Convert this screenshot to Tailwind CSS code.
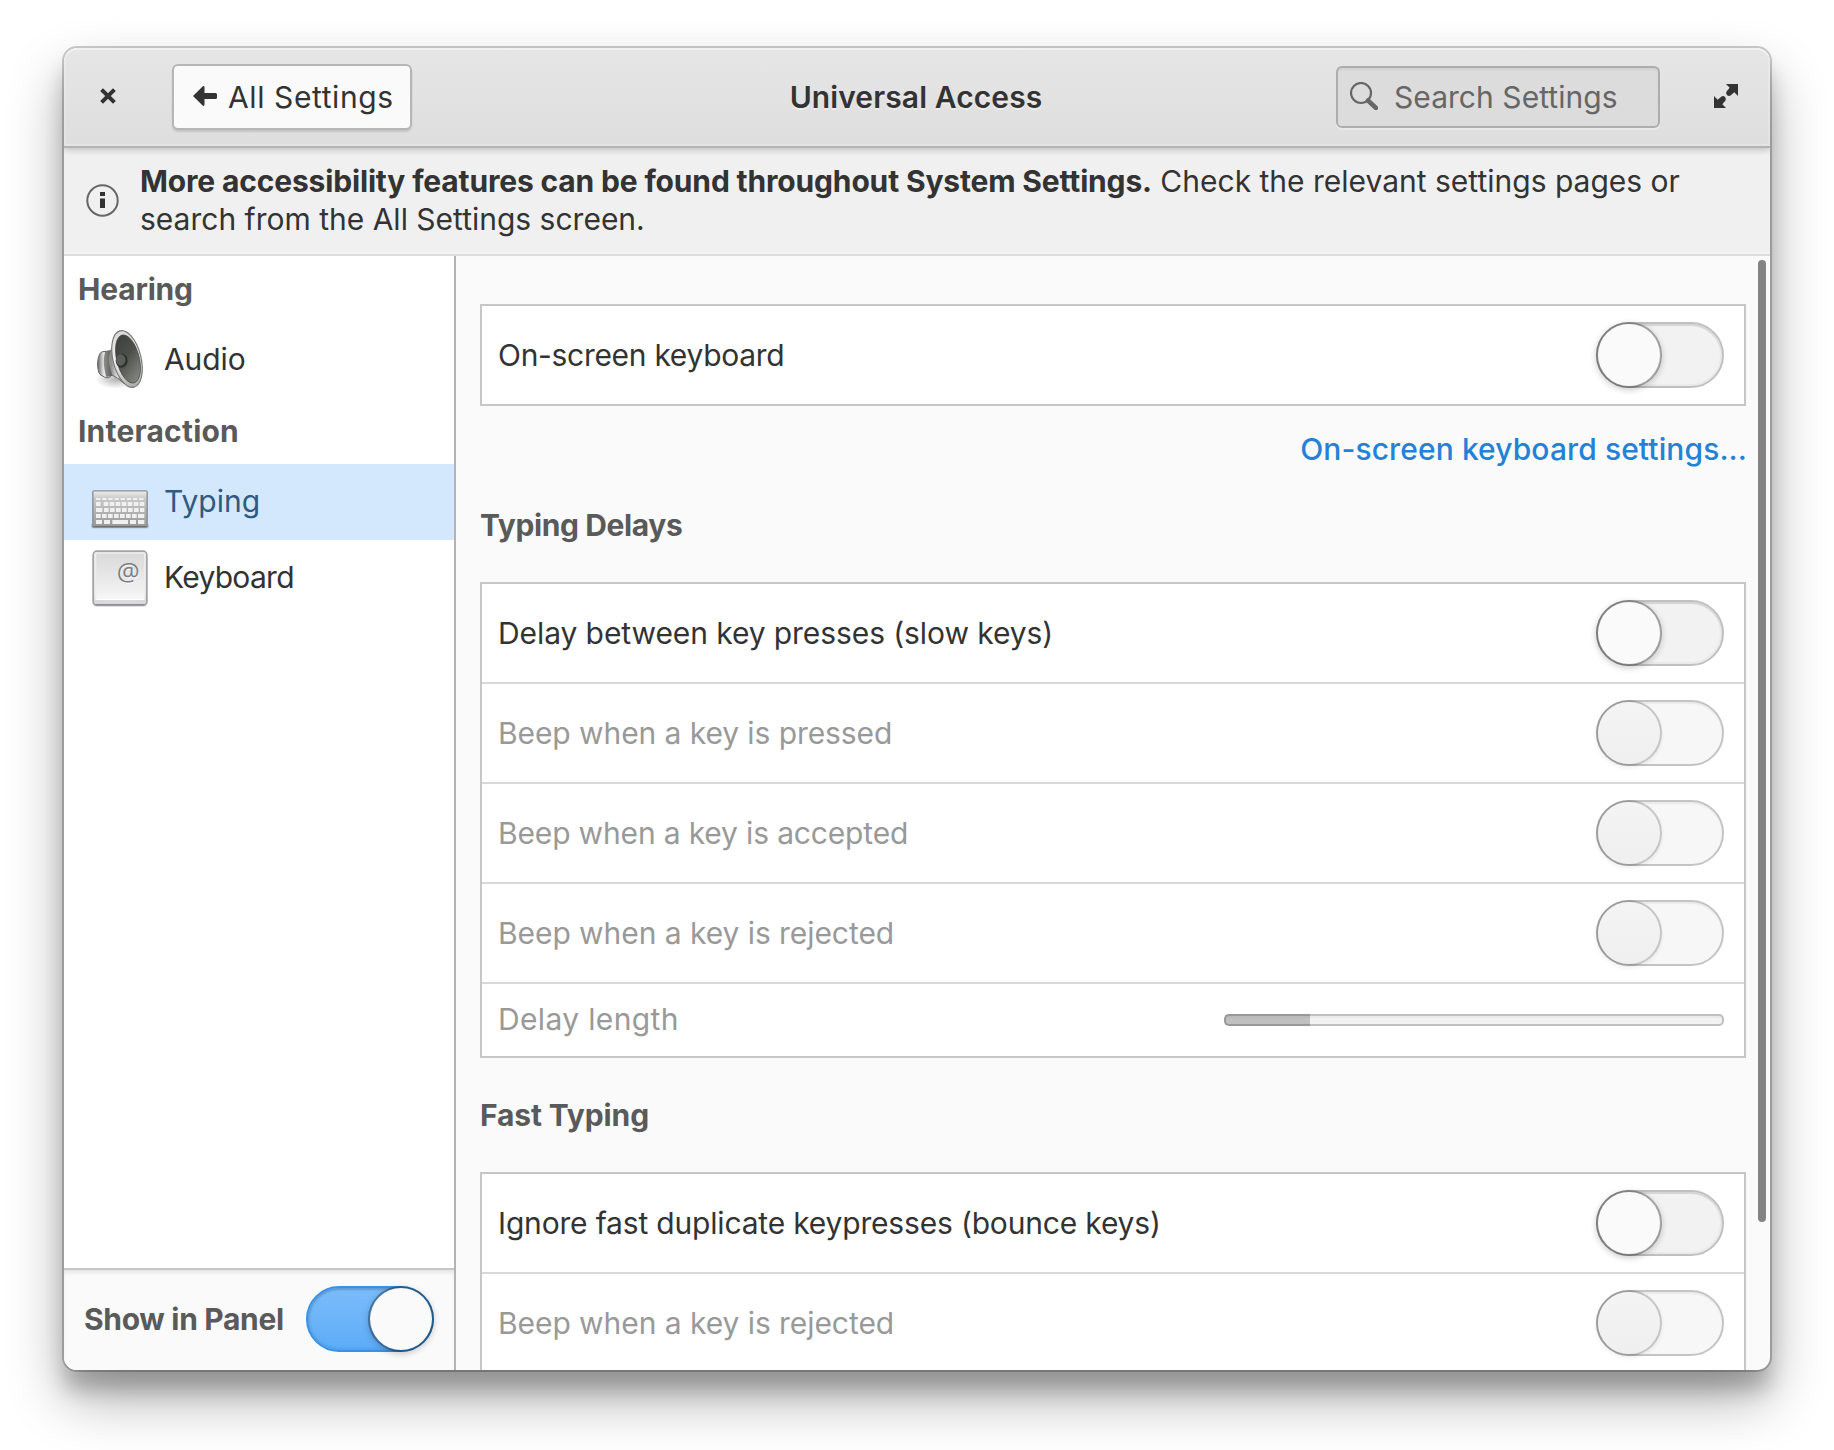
<!DOCTYPE html>
<html lang="en">
<head>
<meta charset="utf-8">
<title>Universal Access</title>
<script src="https://cdn.jsdelivr.net/npm/@tailwindcss/browser@4"></script>
</head>
<body class="h-[1450px] w-[1834px] overflow-hidden bg-white px-16 pt-12 font-['Inter',sans-serif] text-[30px] leading-[38px] text-[#333]">
<div class="flex h-[1322px] w-[1706px] flex-col overflow-hidden rounded-[13px] bg-[#fafafa] shadow-[0_0_0_2px_rgba(0,0,0,0.2),0_28px_56px_rgba(0,0,0,0.33),0_20px_20px_rgba(0,0,0,0.2)]">

  <!-- Header bar -->
  <header class="relative z-10 grid h-[100px] shrink-0 grid-cols-[1fr_auto_1fr] items-center rounded-t-[13px] border-b-2 border-[#b3b3b3] bg-linear-to-b from-[#e6e6e6] to-[#dedede] pr-8 pl-9 shadow-[inset_0_2px_0_rgba(255,255,255,0.35),inset_0_0_0_2px_rgba(255,255,255,0.18),0_2px_6px_rgba(0,0,0,0.2)]">
    <div class="flex items-center">
      <svg class="mb-0.5 size-4" viewBox="0 0 16 16" fill="none" stroke="#333" stroke-width="4"><path d="M1.600 1.600 14.400 14.400M14.400 1.600 1.600 14.400"/></svg>
      <button class="ml-14 flex h-[66px] w-[240px] items-center rounded-md border-2 border-[#b6b6b6] bg-[#fafafa] pl-[19px] shadow-[0_2px_2px_rgba(0,0,0,0.12)]">
        <svg class="mb-0.5 h-5 w-6" viewBox="0 0 24 20" fill="#333"><path d="M0 10 9.600 .5Q11.500-.6 11.500 1.500V7H22.500Q24 7 24 8.500V11.500Q24 13 22.500 13H11.500V18.500Q11.500 20.600 9.600 19.500Z"/></svg>
        <span class="ml-[11px] whitespace-nowrap tracking-[0.6px]">All Settings</span>
      </button>
    </div>
    <h1 class="pr-1.5 font-semibold tracking-[0.1px] [text-shadow:0_2px_0_rgba(255,255,255,0.4)]">Universal Access</h1>
    <div class="flex items-center justify-end">
      <div class="flex h-[62px] w-[324px] items-center rounded-md border-2 border-[#adadad] bg-[#dcdcdc] pl-3 text-[#666] shadow-[inset_0_2px_2px_rgba(0,0,0,0.05),0_2px_0_rgba(255,255,255,0.3)]">
        <svg class="mb-0.5 size-7" viewBox="0 0 28 28" fill="none" stroke="#666"><circle cx="11" cy="11" r="10" stroke-width="2.200"/><path d="M18 18.500 26 26" stroke-width="4.500" stroke-linecap="round"/></svg>
        <span class="ml-4 tracking-[0.050px]">Search Settings</span>
      </div>
      <svg class="mb-0.5 ml-[54px] size-6" viewBox="0 0 24 24" fill="#333"><path d="M12 0H24V12L20.300 8.300 16.500 11.500Q14.500 12.500 13 11T12.500 7.500L15.700 3.700ZM12 24H0V12L3.700 15.700 7.500 12.500Q9.500 11.500 11 13T11.500 16.500L8.300 20.300Z"/></svg>
    </div>
  </header>

  <!-- Info bar -->
  <div class="flex h-[108px] shrink-0 items-center border-b-2 border-[#dcdcdc] bg-[#f0f0f0] pb-0.5 pl-[22px] shadow-[inset_0_-2px_0_#f4f4f4]">
    <svg class="size-[33px]" viewBox="0 0 33 33" fill="none"><circle cx="16.500" cy="16.500" r="15.200" stroke="#666" stroke-width="2"/><path d="M14 8h5v4h-5zM14 14.500h5V24h-5z" fill="#333"/></svg>
    <p class="ml-[21px] whitespace-nowrap"><b class="tracking-[-0.160px]">More accessibility features can be found throughout System Settings.</b> Check the relevant settings pages or<br>search from the All Settings screen.</p>
  </div>

  <div class="flex min-h-0 flex-1">
    <!-- Sidebar -->
    <aside class="flex w-[392px] shrink-0 flex-col border-r-2 border-[#b3b3b3] bg-white">
      <h2 class="flex h-[66px] items-center pl-3.5 font-bold tracking-[-0.200px] text-[#5a5a5a]">Hearing</h2>
      <div class="flex h-[76px] items-center pl-6">
        <svg class="size-16" viewBox="24 54 192 192">
          <defs>
            <linearGradient id="metal" x1="0" y1="0" x2="1" y2="0"><stop offset="0" stop-color="#666"/><stop offset=".25" stop-color="#eee"/><stop offset=".5" stop-color="#888"/><stop offset=".75" stop-color="#e4e4e4"/><stop offset="1" stop-color="#777"/></linearGradient>
            <linearGradient id="rim" x1="0" y1="0" x2="0" y2="1"><stop offset="0" stop-color="#d8d8d6"/><stop offset=".5" stop-color="#f2f2f2"/><stop offset="1" stop-color="#aaa"/></linearGradient>
            <linearGradient id="cone" x1="0" y1="0" x2=".4" y2="1"><stop offset="0" stop-color="#3c3e3b"/><stop offset=".55" stop-color="#4c4e4a"/><stop offset="1" stop-color="#7d7f79"/></linearGradient>
            <radialGradient id="soft"><stop offset="0" stop-color="#000" stop-opacity=".3"/><stop offset="1" stop-color="#000" stop-opacity="0"/></radialGradient>
          </defs>
          <ellipse cx="108" cy="208" rx="62" ry="28" fill="url(#soft)"/>
          <path d="M59 131Q64 123 78 124L92 122Q102 108 106 82L132 220Q112 202 96 195L86 203Q76 206 68 198 58 195 56 186 48 158 59 131Z" fill="url(#metal)" stroke="#666" stroke-width="3"/>
          <path d="M75 126Q66 160 79 200L97 196Q82 160 91 122Z" fill="#4a4a48" opacity=".6"/>
          <ellipse cx="141" cy="147" rx="42" ry="87" transform="rotate(-14 141 147)" fill="url(#rim)" stroke="#777" stroke-width="3.500"/>
          <ellipse cx="144" cy="147" rx="34" ry="74" transform="rotate(-14 144 147)" fill="url(#cone)" stroke="#444" stroke-width="2"/>
          <ellipse cx="125" cy="152" rx="18" ry="21" fill="#30322f"/>
          <ellipse cx="122" cy="150" rx="14" ry="17" fill="#5c5e5a"/>
        </svg>
        <span class="mb-0.5 ml-3 tracking-[-0.100px]">Audio</span>
      </div>
      <h2 class="flex h-[66px] items-center pl-3.5 font-bold tracking-[0.200px] text-[#5a5a5a]">Interaction</h2>
      <div class="flex h-[76px] items-center bg-[#d4e8fd] pl-6 text-[#2f5a82]">
        <svg class="size-16" viewBox="24 0 192 192">
          <defs><linearGradient id="board" x1="0" y1="0" x2="0" y2="1"><stop offset="0" stop-color="#efefef"/><stop offset=".22" stop-color="#c8c8c8"/><stop offset="1" stop-color="#989898"/></linearGradient></defs>
          <rect x="34" y="160" width="172" height="15" rx="5" fill="#4d6275" opacity=".4"/>
          <rect x="38.500" y="62.500" width="163" height="108" rx="4" fill="url(#board)" stroke="#8b8d90" stroke-width="4"/>
          <path d="M40 170H200" stroke="#6c6e70" stroke-width="4"/>
          <g fill="none" stroke="#f0f0f0">
            <path d="M48 87H193" stroke-width="6" stroke-dasharray="13 5.500"/>
            <path d="M48 102H62M71 102H193" stroke-width="12" stroke-dasharray="14 4"/>
            <path d="M48 120H193" stroke-width="12" stroke-dasharray="19 5 14 4 14 4 14 4 14 4 14 4 14 4"/>
            <path d="M48 138H193" stroke-width="12" stroke-dasharray="14 4 14 4 14 4 14 4 14 4 14 4 14 4 20 0"/>
            <path d="M48 156H66M72 156H90M97 156H144M150 156H168M174 156H193" stroke-width="12"/>
          </g>
        </svg>
        <span class="mb-0.5 ml-3">Typing</span>
      </div>
      <div class="flex h-[76px] items-center pl-6">
        <svg class="size-16" viewBox="24 228 192 192">
          <defs><linearGradient id="cap" x1="0" y1="0" x2="0" y2="1"><stop offset="0" stop-color="#d9d9da"/><stop offset="1" stop-color="#f6f6f6"/></linearGradient></defs>
          <rect x="37" y="250" width="166" height="161" rx="14" fill="#000" opacity=".12"/>
          <rect x="39.500" y="243.500" width="161" height="162" rx="11" fill="#dadadd" stroke="#a3a3aa" stroke-width="5"/>
          <path d="M46 404H194" stroke="#8b8b92" stroke-width="4"/>
          <rect x="43" y="247" width="154" height="142" rx="6" fill="#ececec"/>
          <rect x="49" y="251" width="143" height="136" rx="4" fill="url(#cap)"/>
          <path d="M47 388H193" stroke="#fff" stroke-width="4"/>
          <text x="144.500" y="332" text-anchor="middle" font-family="Open Sans, sans-serif" font-size="77" fill="#fff" transform="translate(2 3)">@</text>
          <text x="144.500" y="332" text-anchor="middle" font-family="Open Sans, sans-serif" font-size="77" fill="#7e7e85">@</text>
        </svg>
        <span class="mb-0.5 ml-3 tracking-[-0.720px]">Keyboard</span>
      </div>
      <div class="mt-auto flex h-[102px] items-center border-t-2 border-[#c6c6c6] bg-[#fafafa] pb-0.5 pl-5 shadow-[inset_0_4px_5px_-2px_rgba(0,0,0,0.1)]">
        <span class="w-[222px] whitespace-nowrap font-bold tracking-[-0.320px] text-[#5a5a5a]">Show in Panel</span>
        <div class="relative h-[66px] w-32 rounded-full border-2 border-[#3893e8] bg-linear-to-b from-[#7bbcf9] to-[#5cacf8] shadow-[inset_0_2px_2px_rgba(0,0,0,0.12),inset_0_0_2px_2px_rgba(0,60,140,0.1)]">
          <div class="absolute -top-0.5 -right-0.5 size-[66px] rounded-full border-2 border-black/35 bg-[#fafafa] bg-clip-padding shadow-[0_2px_6px_rgba(0,0,0,0.2)]"></div>
        </div>
      </div>
    </aside>

    <!-- Settings pane -->
    <main class="flex min-w-0 flex-1 overflow-hidden">
      <div class="w-[1290px] pt-12 pl-6">
        <section class="border-2 border-[#c6c6c6] bg-white">
          <div data-row="on" class="flex h-[98px] items-center justify-between pr-5 pl-4"><span class="tracking-[-0.300px]">On-screen keyboard</span></div>
        </section>
        <a class="-mr-px flex h-[86px] items-center justify-end font-medium tracking-[0.100px] whitespace-nowrap text-[#2382d8]">On-screen keyboard settings...</a>
        <h2 class="flex h-[90px] items-center pb-6 font-bold tracking-[-0.390px] text-[#5a5a5a]">Typing Delays</h2>
        <section class="divide-y-2 divide-[#d9d9d9] border-2 border-[#c6c6c6] bg-white">
          <div data-row="on" class="flex h-[100px] items-center justify-between pr-5 pl-4"><span class="tracking-[-0.085px]">Delay between key presses (slow keys)</span></div>
          <div data-row="off" class="flex h-[100px] items-center justify-between pr-5 pl-4 text-[#999]"><span class="tracking-[-0.080px]">Beep when a key is pressed</span></div>
          <div data-row="off" class="flex h-[100px] items-center justify-between pr-5 pl-4 text-[#999]"><span class="tracking-[-0.160px]">Beep when a key is accepted</span></div>
          <div data-row="off" class="flex h-[100px] items-center justify-between pr-5 pl-4 text-[#999]"><span class="tracking-[-0.060px]">Beep when a key is rejected</span></div>
          <div class="flex h-[72px] items-center justify-between pr-5 pl-4 text-[#999]">
            <span class="mb-0.5 tracking-[0.350px]">Delay length</span>
            <div class="flex h-3 w-[500px]">
              <div class="w-[86px] rounded-l-[5px] border-2 border-r-0 border-[#999] bg-[#c0c0c0] shadow-[inset_0_2px_0_#bababa]"></div>
              <div class="flex-1 rounded-r-[5px] border-2 border-l-0 border-[#bfbfbf] bg-[#f2f2f2] shadow-[inset_0_2px_0_#e9e9e9]"></div>
            </div>
          </div>
        </section>
        <h2 class="flex h-[114px] items-center font-bold tracking-[-0.120px] text-[#5a5a5a]">Fast Typing</h2>
        <section class="divide-y-2 divide-[#d9d9d9] border-2 border-[#c6c6c6] bg-white">
          <div data-row="on" class="flex h-[100px] items-center justify-between pr-5 pl-4"><span class="tracking-[-0.180px]">Ignore fast duplicate keypresses (bounce keys)</span></div>
          <div data-row="off" class="flex h-[98px] items-center justify-between pr-5 pl-4 text-[#999]"><span class="tracking-[-0.060px]">Beep when a key is rejected</span></div>
        </section>
      </div>
      <div class="mt-1 ml-3 h-[962px] w-2 rounded-full bg-[#838383]"></div>
    </main>
  </div>
</div>

<template id="switch-on">
  <div class="relative h-[66px] w-32 rounded-full border-2 border-[#c0c0c0] bg-[#f2f2f2] shadow-[inset_0_2px_1px_rgba(0,0,0,0.09),inset_0_0_0_2px_rgba(0,0,0,0.03)]">
    <div class="absolute -top-0.5 -left-0.5 size-[66px] rounded-full border-2 border-black/30 bg-[#fafafa] bg-clip-padding shadow-[0_2px_6px_rgba(0,0,0,0.2)]"></div>
  </div>
</template>
<template id="switch-off">
  <div class="relative h-[66px] w-32 rounded-full border-2 border-[#c4c4c4] bg-[#f7f7f7] shadow-[inset_0_2px_1px_rgba(0,0,0,0.05)]">
    <div class="absolute -top-0.5 -left-0.5 size-[66px] rounded-full border-2 border-black/20 bg-linear-to-b from-[#f4f4f4] to-[#efefef] bg-clip-padding shadow-[0_2px_4px_rgba(0,0,0,0.07)]"></div>
  </div>
</template>
<script>
  for (const row of document.querySelectorAll('[data-row]')) {
    row.append(document.getElementById('switch-' + row.dataset.row).content.cloneNode(true));
  }
</script>
</body>
</html>
